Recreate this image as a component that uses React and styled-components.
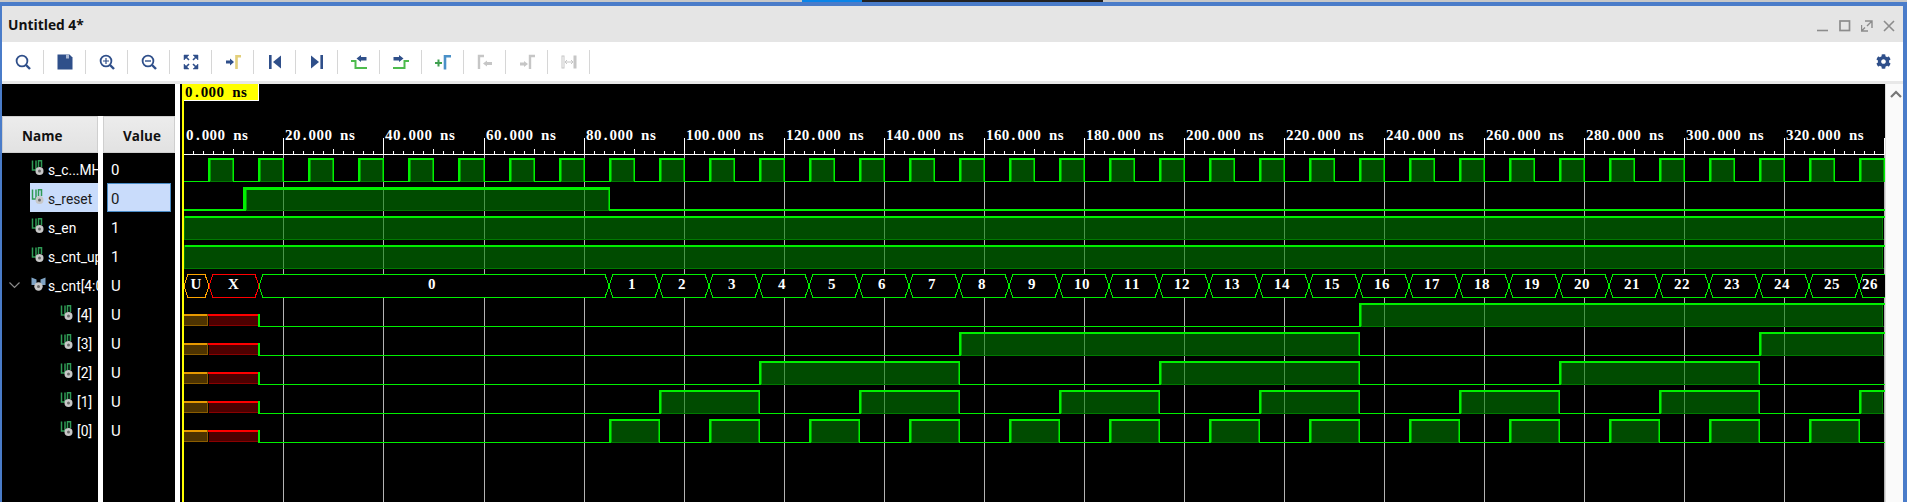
import React from "react";
import styled, { createGlobalStyle } from "styled-components";
import { FaCog } from "react-icons/fa";

const GlobalStyle = createGlobalStyle`
  * {
    box-sizing: border-box;
  }
  html, body {
    margin: 0;
    padding: 0;
    width: 100%;
    height: 100%;
    overflow: hidden;
    background: #fff;
    font-family: "Open Sans", "Noto Sans", sans-serif;
  }
`;

//waveform scale, measured from the grid lines
const END_NS = 340;
const WAVE_RIGHT = 1885;
const px = (t) => Math.round(183.3 + 5.0035 * t);
const lowY = (row) => 181 + 29 * row;
const highY = (row) => 158 + 29 * row;

const NAVY = "#2f4f8a";
const GREEN = "#00f000";
const MID_GREEN = "#00a000";
const DARK_GREEN = "#007a00";
const GRID = "#b4b4b4";
const MUTED = "#c6c6c6";

const range = (n) => Array.from({ length: n }, (_, i) => i);

//pulses as [start ns, end ns]; null end means it runs off the right side
const clockPulses = range(END_NS / 10).map((i) => [5 + i * 10, 10 + i * 10]);
const counterStart = (n) => 85 + (n - 1) * 10;
const bitPulses = (bit) => {
  const pulses = [];
  let start = null;
  range(26).forEach((i) => {
    const n = i + 1;
    const high = (n >> bit) & 1;
    if (high && start === null) start = counterStart(n);
    if (!high && start !== null) {
      pulses.push([start, counterStart(n)]);
      start = null;
    }
  });
  if (start !== null) pulses.push([start, null]);
  return pulses;
};

const signals = [
  { name: "s_c...MHz", value: "0" },
  { name: "s_reset", value: "0", selected: true },
  { name: "s_en", value: "1" },
  { name: "s_cnt_up", value: "1" },
  { name: "s_cnt[4:0]", value: "U", bus: true },
  { name: "[4]", value: "U", child: true },
  { name: "[3]", value: "U", child: true },
  { name: "[2]", value: "U", child: true },
  { name: "[1]", value: "U", child: true },
  { name: "[0]", value: "U", child: true },
];

const SerifText = styled.text`
  font-family: "Liberation Serif", "DejaVu Serif", serif;
  font-weight: 700;
  font-size: 15px;
`;

//bitmap style labels: one fixed cell per character
const CELL = 7.87;
const GLYPH_SHIFT = { ".": 2, s: 1 };
const CellText = ({ x, y, fill, children }) => {
  const text = String(children);
  const xs = text
    .split("")
    .map((c, i) => (x + i * CELL + (GLYPH_SHIFT[c] || 0)).toFixed(1))
    .join(" ");
  return (
    <SerifText x={xs} y={y} fill={fill}>
      {text}
    </SerifText>
  );
};

const Digital = ({ row, pulses, startAt = 0, selected }) => {
  const low = lowY(row);
  const high = highY(row);
  const parts = [];
  const lowTop = selected ? low - 1 : low;
  const lowHeight = selected ? 2 : 1;
  const riseWidth = selected ? 3 : 2;
  let cursor = px(startAt);

  pulses.forEach(([t0, t1], i) => {
    const x0 = t0 === 0 ? 184 : px(t0);
    const x1 = t1 === null ? WAVE_RIGHT - 2 : px(t1);
    if (x0 > cursor) parts.push(<rect key={`l${i}`} x={cursor} y={lowTop} width={x0 - cursor} height={lowHeight} fill={GREEN} />);
    parts.push(
      <g key={`p${i}`}>
        <rect x={x0} y={high} width={x1 - x0} height={low - high + 1} fill="#008000" fillOpacity={0.59} />
        <rect x={x0} y={low} width={x1 - x0 + 1} height={1} fill={DARK_GREEN} />
        <rect x={x1 - 1} y={high} width={1} height={low - high} fill={t1 === null ? DARK_GREEN : MID_GREEN} />
        <rect x={x0} y={high} width={t1 === null ? WAVE_RIGHT - x0 : x1 - x0 + 1} height={riseWidth} fill={GREEN} />
        {t0 === 0 ? (
          <rect x={x0} y={high} width={1} height={low - high} fill={DARK_GREEN} />
        ) : (
          <>
            <rect x={x0 + riseWidth} y={high + riseWidth} width={1} height={low - high - riseWidth} fill={MID_GREEN} />
            <rect x={x0} y={high} width={riseWidth} height={low - high + 1} fill={GREEN} />
          </>
        )}
        {t1 !== null && <rect x={x1} y={high} width={1} height={low - high + 1} fill={GREEN} />}
      </g>
    );
    cursor = x1;
  });
  if (cursor < WAVE_RIGHT - 2) {
    parts.push(<rect key="tail" x={cursor} y={lowTop} width={WAVE_RIGHT - cursor} height={lowHeight} fill={GREEN} />);
  }
  return <g>{parts}</g>;
};

//half height U / X blocks in front of the bit rows
const UnknownBits = ({ row }) => {
  const low = lowY(row);
  const top = low - 12;
  return (
    <g>
      <rect x={184} y={top} width={24} height={12} fill="#4d3300" />
      <rect x={184} y={top} width={24} height={2} fill="#e89a00" />
      <rect x={184} y={low - 1} width={24} height={1} fill="#8a5c00" />
      <rect x={207} y={top} width={1} height={12} fill="#8a5c00" />
      <rect x={209} y={top} width={50} height={12} fill="#4d0000" />
      <rect x={208} y={top} width={51} height={2} fill="#ff0000" />
      <rect x={209} y={low - 1} width={49} height={1} fill="#8a0000" />
      <rect x={258} y={top} width={2} height={13} fill={GREEN} />
    </g>
  );
};

const busValues = [
  { x0: 184, x1: 209, text: "U", color: "#ffa500" },
  { x0: 209, x1: 259, text: "X", color: "#ff0000" },
  { x0: 259, x1: px(85), text: "0", color: GREEN },
  ...range(26).map((i) => ({
    x0: px(counterStart(i + 1)),
    x1: i === 25 ? WAVE_RIGHT + 8 : px(counterStart(i + 2)),
    text: String(i + 1),
    color: GREEN,
  })),
];

const BusRow = ({ row }) => {
  const top = highY(row) + 0.5;
  const bottom = lowY(row) + 0.5;
  const mid = (top + bottom) / 2;
  return (
    <g>
      {busValues.map((v) => {
        const visibleEnd = Math.min(v.x1, WAVE_RIGHT);
        const center = (v.x0 + visibleEnd) / 2 - 2;
        const points = `${v.x0},${mid} ${v.x0 + 4},${top} ${v.x1 - 4},${top} ${v.x1},${mid} ${v.x1 - 4},${bottom} ${v.x0 + 4},${bottom}`;
        return (
          <g key={v.text}>
            <polygon points={points} fill="#000" stroke={v.color} strokeWidth={1} shapeRendering="crispEdges" />
            <CellText x={center - (v.text.length * CELL) / 2} y={lowY(row) - 8} fill="#fff">
              {v.text}
            </CellText>
          </g>
        );
      })}
    </g>
  );
};

const Ruler = () => (
  <g>
    <rect x={184} y={154} width={WAVE_RIGHT - 184} height={1} fill="#fff" />
    {range(END_NS / 2).map((i) => {
      const t = (i + 1) * 2;
      const major = t % 20 === 0;
      const mid = t % 10 === 0;
      const top = major ? 138 : mid ? 149 : 151;
      return <rect key={t} x={px(t)} y={top} width={1} height={154 - top} fill="#fff" />;
    })}
    {range(17).map((i) => {
      const t = i * 20;
      return (
        <CellText key={t} x={t === 0 ? 186 : px(t) + 2} y={140} fill="#fff">
          {`${t}.000 ns`}
        </CellText>
      );
    })}
  </g>
);

const Waveform = () => (
  <WaveSvg viewBox="184 84 1701 418" width={1701} height={418}>
    {range(17).map((i) => (
      <rect key={i} x={px((i + 1) * 20)} y={155} width={1} height={347} fill={GRID} />
    ))}
    <Ruler />
    <Digital row={0} pulses={clockPulses} />
    <Digital row={1} pulses={[[12, 85]]} selected />
    <Digital row={2} pulses={[[0, null]]} />
    <Digital row={3} pulses={[[0, null]]} />
    <BusRow row={4} />
    {[4, 3, 2, 1, 0].map((bit, i) => (
      <g key={bit}>
        <UnknownBits row={5 + i} />
        <Digital row={5 + i} pulses={bitPulses(bit)} startAt={15} />
      </g>
    ))}
    <rect x={184} y={84} width={75} height={17} fill="#fff" />
    <rect x={184} y={84} width={74} height={16} fill="#ffff00" />
    <CellText x={185} y={97} fill="#000">
      0.000 ns
    </CellText>
  </WaveSvg>
);

const SignalIcon = () => (
  <svg width="15" height="16" viewBox="0 0 15 16">
    <path d="M1.5 0.5V10H5V0.5" fill="none" stroke="#2f9a55" strokeWidth="1.5" />
    <path d="M7.5 7V0.8H10.5V7" fill="none" stroke="#2f9a55" strokeWidth="1.5" />
    <circle cx="8.5" cy="11" r="4" fill="#c8c8c8" />
    <circle cx="8.5" cy="11" r="1.5" fill="#6a6a6a" />
  </svg>
);

const BusIcon = () => (
  <svg width="15" height="16" viewBox="0 0 15 16">
    <path d="M0.5 1.5L5.5 3.5V9H0.5Z M14.5 1.5L9.5 3.5V9H14.5Z" fill="#7fa3c4" />
    <circle cx="7.5" cy="10.5" r="4.2" fill="#c8c8c8" />
    <circle cx="7.5" cy="10.5" r="1.5" fill="#6a6a6a" />
  </svg>
);

const Lens = ({ children }) => (
  <>
    <circle cx="7" cy="7" r="5.4" fill="none" stroke={NAVY} strokeWidth="1.8" />
    <path d="M11 11L15 15" stroke={NAVY} strokeWidth="2.4" />
    {children}
  </>
);

const toolIcons = {
  search: <Lens />,
  save: (
    <>
      <path d="M0.5 0.5H12.5L15.5 3.5V15.5H0.5Z" fill={NAVY} />
      <rect x="9" y="0.5" width="3" height="4" fill="#a9b8d4" />
    </>
  ),
  zoomIn: (
    <Lens>
      <path d="M7 4V10M4 7H10" stroke={NAVY} strokeWidth="1.2" />
    </Lens>
  ),
  zoomOut: (
    <Lens>
      <path d="M4 7H10" stroke={NAVY} strokeWidth="1.4" />
    </Lens>
  ),
  fit: (
    <g fill={NAVY} stroke={NAVY}>
      <path d="M1 1H6L1 6Z M15 1H10L15 6Z M1 15H6L1 10Z M15 15H10L15 10Z" strokeWidth="0.5" />
      <path d="M3 3L6 6M13 3L10 6M3 13L6 10M13 13L10 10" strokeWidth="1.6" />
    </g>
  ),
  gotoCursor: (
    <>
      <path d="M1 6.5H5V4.5L9 8L5 11.5V9.5H1Z" fill={NAVY} />
      <path d="M11.5 15V2.2H16" fill="none" stroke="#e3cf7a" strokeWidth="2.6" />
    </>
  ),
  prev: (
    <>
      <rect x="2" y="1" width="2.6" height="14" fill={NAVY} />
      <path d="M14 1.5V14.5L6 8Z" fill={NAVY} />
    </>
  ),
  next: (
    <>
      <rect x="11.4" y="1" width="2.6" height="14" fill={NAVY} />
      <path d="M2 1.5V14.5L10 8Z" fill={NAVY} />
    </>
  ),
  prevEdge: (
    <>
      <path d="M0 7H4.5V14H16" fill="none" stroke="#4dbb4d" strokeWidth="2" />
      <path d="M5.5 4.5L10 1V3H15.5V6.5H10V8Z" fill={NAVY} />
    </>
  ),
  nextEdge: (
    <>
      <path d="M0 14H11.5V7H16" fill="none" stroke="#4dbb4d" strokeWidth="2" />
      <path d="M10.5 4.5L6 1V3H0.5V6.5H6V8Z" fill={NAVY} />
    </>
  ),
  addMarker: (
    <>
      <path d="M0 9H7M3.5 5.5V12.5" stroke="#3f9f4f" strokeWidth="2" />
      <path d="M10 15.5V2.2H16" fill="none" stroke="#4a90c8" strokeWidth="2.6" />
    </>
  ),
  prevMarker: (
    <>
      <path d="M2 15V2H7" fill="none" stroke={MUTED} strokeWidth="2.4" />
      <path d="M6 9.5L10 6.5V8H15V11H10V12.5Z" fill={MUTED} />
    </>
  ),
  nextMarker: (
    <>
      <path d="M1 8.5H5V7L9 10L5 13V11.5H1Z" fill={MUTED} />
      <path d="M11 15V2H16" fill="none" stroke={MUTED} strokeWidth="2.4" />
    </>
  ),
  span: (
    <>
      <rect x="1" y="2" width="2" height="12" fill="none" stroke={MUTED} />
      <rect x="12.5" y="1.5" width="3" height="13" fill={MUTED} />
      <path d="M4 8H12M6 6L4 8L6 10M10 6L12 8L10 10" fill="none" stroke={MUTED} />
    </>
  ),
};

const toolOrder = [
  "search",
  "save",
  "zoomIn",
  "zoomOut",
  "fit",
  "gotoCursor",
  "prev",
  "next",
  "prevEdge",
  "nextEdge",
  "addMarker",
  "prevMarker",
  "nextMarker",
  "span",
];

const App = () => {
  return (
    <>
      <GlobalStyle />
      <Screen>
        <TaskStrip>
          <TaskSegment $width={802} $color="#c8c8c8" />
          <TaskSegment $width={60} $color="#0a84e8" />
          <TaskSegment $width={241} $color="#222222" />
          <TaskSegment $grow $color="#c8c8c8" />
        </TaskStrip>
        <Window>
          <TitleBar>
            <Title>Untitled 4*</Title>
            <WindowButtons>
              <WindowButton>
                <path d="M0 10.5H11" stroke="#8c8c8c" strokeWidth="1.6" />
              </WindowButton>
              <WindowButton>
                <rect x="1" y="1" width="9.5" height="9.5" fill="none" stroke="#8c8c8c" strokeWidth="1.7" />
              </WindowButton>
              <WindowButton>
                <path d="M4 1H11V8M11 1L6 6M0.5 5V11H7M0.5 11L4 7.5" fill="none" stroke="#8c8c8c" strokeWidth="1.4" />
              </WindowButton>
              <WindowButton>
                <path d="M1 1L11 11M11 1L1 11" stroke="#8c8c8c" strokeWidth="1.6" />
              </WindowButton>
            </WindowButtons>
          </TitleBar>

          <Toolbar>
            <ToolGroup>
              {toolOrder.map((name) => (
                <React.Fragment key={name}>
                  <ToolButton>
                    <svg width="16" height="16" viewBox="0 0 16 16">
                      {toolIcons[name]}
                    </svg>
                  </ToolButton>
                  <ToolSeparator />
                </React.Fragment>
              ))}
            </ToolGroup>
            <SettingsButton>
              <FaCog size={15} color={NAVY} />
            </SettingsButton>
          </Toolbar>

          <ToolbarEdge />

          <Content>
            <SidePane>
              <SideSpacer />
              <SideColumns>
                <NameColumn>
                  <HeaderCell>Name</HeaderCell>
                  {signals.map((s) => (
                    <NameRow key={s.name}>
                      <Indent $child={s.child}>
                        {s.bus && (
                          <svg width="11" height="7" viewBox="0 0 11 7">
                            <path d="M0.5 0.5L5.5 5.5L10.5 0.5" fill="none" stroke="#8a8a8a" strokeWidth="1.2" />
                          </svg>
                        )}
                      </Indent>
                      <NameLabel $selected={s.selected}>
                        <IconSlot>{s.bus ? <BusIcon /> : <SignalIcon />}</IconSlot>
                        {s.name}
                      </NameLabel>
                    </NameRow>
                  ))}
                </NameColumn>
                <ValueColumn>
                  <HeaderCell>Value</HeaderCell>
                  {signals.map((s) => (
                    <ValueRow key={s.name}>
                      <ValueCell $selected={s.selected}>{s.value}</ValueCell>
                    </ValueRow>
                  ))}
                </ValueColumn>
              </SideColumns>
            </SidePane>
            <WavePane>
              <CursorLine />
              <Waveform />
            </WavePane>
            <ScrollTrack>
              <svg width="12" height="8" viewBox="0 0 12 8">
                <path d="M1 7L6 2L11 7" fill="none" stroke="#777" strokeWidth="2.2" />
              </svg>
            </ScrollTrack>
          </Content>
        </Window>
      </Screen>
    </>
  );
};
export default App;

const Screen = styled.div`
  display: flex;
  flex-direction: column;
  width: 1907px;
  height: 502px;
  overflow: hidden;
`;

const TaskStrip = styled.div`
  display: flex;
  height: 2px;
  flex: none;
`;

const TaskSegment = styled.div`
  height: 100%;
  background: ${(p) => p.$color};
  width: ${(p) => (p.$width ? `${p.$width}px` : "auto")};
  flex: ${(p) => (p.$grow ? 1 : "none")};
`;

const Window = styled.div`
  display: flex;
  flex-direction: column;
  flex: 1;
  min-height: 0;
  border-top: 4px solid #4a7cc9;
  border-left: 2px solid #4a7cc9;
  border-right: 4px solid #4a7cc9;
`;

const TitleBar = styled.div`
  display: flex;
  align-items: center;
  justify-content: space-between;
  height: 36px;
  flex: none;
  padding: 0 3px 0 6px;
  background: #e5e5e5;
`;

const Title = styled.div`
  font-size: 13.8px;
  font-weight: 700;
  color: #111;
`;

const WindowButtons = styled.div`
  display: flex;
  align-items: center;
`;

const WindowButton = styled.svg.attrs({ viewBox: "0 0 12 12" })`
  width: 12px;
  height: 12px;
  margin: 4px 5px 0;
`;

const Toolbar = styled.div`
  display: flex;
  align-items: center;
  justify-content: space-between;
  height: 39px;
  flex: none;
  padding-right: 12px;
  background: #fff;
`;

const ToolGroup = styled.div`
  display: flex;
  align-items: center;
`;

const ToolButton = styled.div`
  display: flex;
  align-items: center;
  justify-content: center;
  width: 41px;
  height: 39px;
`;

const ToolSeparator = styled.div`
  width: 1px;
  height: 24px;
  background: #d6d6d6;
`;

const SettingsButton = styled.div`
  display: flex;
  align-items: center;
`;

const ToolbarEdge = styled.div`
  height: 3px;
  flex: none;
  background: #e8e8e8;
`;

const Content = styled.div`
  display: flex;
  flex: 1;
  min-height: 0;
  background: #000;
`;

const SidePane = styled.div`
  display: flex;
  flex-direction: column;
  width: 178px;
  flex: none;
  border-right: 5px solid #fff;
`;

const SideSpacer = styled.div`
  height: 32px;
  flex: none;
`;

const SideColumns = styled.div`
  display: flex;
  flex: 1;
  min-height: 0;
`;

const NameColumn = styled.div`
  width: 101px;
  flex: none;
  border-right: 5px solid #fff;
`;

const ValueColumn = styled.div`
  width: 72px;
  flex: none;
`;

const HeaderCell = styled.div`
  display: flex;
  align-items: center;
  height: 37px;
  margin-bottom: 1px;
  padding: 2px 0 0 19px;
  font-size: 13.5px;
  font-weight: 700;
  color: #111;
  background: linear-gradient(#ececec, #e2e2e2);
  border: 1px solid #cfcfcf;
`;

const NameRow = styled.div`
  display: flex;
  align-items: stretch;
  height: 29px;
  overflow: hidden;
`;

const Indent = styled.div`
  display: flex;
  align-items: center;
  justify-content: center;
  flex: none;
  width: ${(p) => (p.$child ? "57px" : "28px")};
  padding-top: 2px;
  padding-right: 4px;
`;

const NameLabel = styled.div`
  display: flex;
  align-items: center;
  flex: 1;
  min-width: 0;
  padding-top: 2px;
  white-space: nowrap;
  font-family: Roboto, "Open Sans", sans-serif;
  font-size: 13.8px;
  color: ${(p) => (p.$selected ? "#1a1a1a" : "#fff")};
  background: ${(p) => (p.$selected ? "#c9dcfb" : "transparent")};
`;

const IconSlot = styled.div`
  display: flex;
  flex: none;
  width: 18px;
  padding-left: 1px;
  margin-top: -4px;
`;

const ValueRow = styled.div`
  height: 29px;
  padding: 0 4px;
`;

const ValueCell = styled.div`
  display: flex;
  align-items: center;
  height: 100%;
  padding: 2px 0 0 3px;
  font-family: Roboto, "Open Sans", sans-serif;
  font-size: 15px;
  color: ${(p) => (p.$selected ? "#1a1a1a" : "#fff")};
  background: ${(p) => (p.$selected ? "#c9dcfb" : "transparent")};
  border: 1px solid ${(p) => (p.$selected ? "#4a8cc7" : "transparent")};
`;

const WavePane = styled.div`
  display: flex;
  flex: 1;
  min-width: 0;
  padding-left: 2px;
`;

const CursorLine = styled.div`
  width: 2px;
  flex: none;
  background: #ffff00;
`;

const WaveSvg = styled.svg`
  display: block;
  flex: none;
`;

const ScrollTrack = styled.div`
  display: flex;
  justify-content: center;
  width: 18px;
  flex: none;
  padding: 6px 0 0 3px;
  background: #fafafa;
  border-left: 1px solid #dcdcdc;
`;
